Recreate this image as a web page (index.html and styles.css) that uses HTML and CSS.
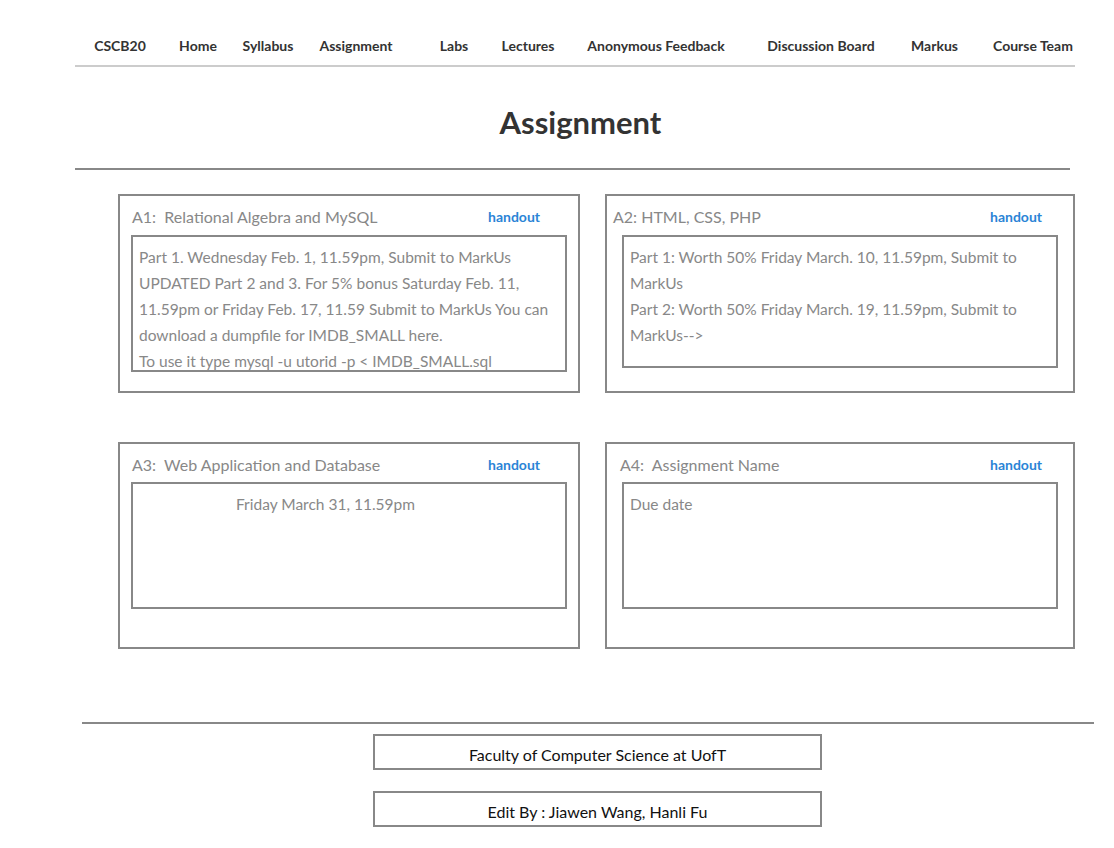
FILE: index.html
```html
<!DOCTYPE html>
<html lang="en">
<head>
    <meta charset="UTF-8" />
    <meta name="viewport" content="width=device-width, initial-scale=1.0" />
    <title>CSCB20 - Assignment</title>
    <link rel="stylesheet" href="styles.css">
</head>
<body>

<nav class="topnav">
    <a href="#">CSCB20</a>
    <a href="#">Home</a>
    <a href="#">Syllabus</a>
    <a href="#">Assignment</a>
    <a href="#">Labs</a>
    <a href="#">Lectures</a>
    <a href="#">Anonymous Feedback</a>
    <a href="#">Discussion Board</a>
    <a href="#">Markus</a>
    <a href="#">Course Team</a>
</nav>

<h1 class="page-title">Assignment</h1>

<div class="assignments">
    <!-- A1 -->
    <div class="card">
        <div class="card-head">
            <span class="card-title a1">A1:&nbsp; Relational Algebra and MySQL</span>
            <a class="handout" href="#">handout</a>
        </div>
        <div class="card-body tall">
            Part 1. Wednesday Feb. 1, 11.59pm, Submit to MarkUs<br>
            UPDATED Part 2 and 3. For 5% bonus Saturday Feb. 11,<br>
            11.59pm or Friday Feb. 17, 11.59 Submit to MarkUs You can<br>
            download a dumpfile for IMDB_SMALL here.<br>
            To use it type mysql -u utorid -p &lt; IMDB_SMALL.sql
        </div>
    </div>

    <!-- A2 -->
    <div class="card">
        <div class="card-head">
            <span class="card-title a2">A2: HTML, CSS, PHP</span>
            <a class="handout" href="#">handout</a>
        </div>
        <div class="card-body mid">
            Part 1: Worth 50% Friday March. 10, 11.59pm, Submit to<br>
            MarkUs<br>
            Part 2: Worth 50% Friday March. 19, 11.59pm, Submit to<br>
            MarkUs--&gt;
        </div>
    </div>

    <!-- A3 -->
    <div class="card">
        <div class="card-head">
            <span class="card-title a3">A3:&nbsp; Web Application and Database</span>
            <a class="handout" href="#">handout</a>
        </div>
        <div class="card-body short">
            <span class="due-indent">Friday March 31, 11.59pm</span>
        </div>
    </div>

    <!-- A4 -->
    <div class="card">
        <div class="card-head">
            <span class="card-title a4">A4:&nbsp; Assignment Name</span>
            <a class="handout" href="#">handout</a>
        </div>
        <div class="card-body short">
            Due date
        </div>
    </div>
</div>

<footer class="footer">
    <div class="footer-box">Faculty of Computer Science at UofT</div>
    <div class="footer-box">Edit By : Jiawen Wang, Hanli Fu</div>
</footer>

</body>
</html>
```

FILE: styles.css
```css
* {
    box-sizing: border-box;
    margin: 0;
    padding: 0;
}

body {
    font-family: 'Lato', 'Open Sans', sans-serif;
    background: white;
    color: #333;
}

a {
    text-decoration: none;
}

/* Top navigation */
.topnav {
    display: grid;
    grid-template-columns: 80px 76px 64px 112px 84px 64px 192px 138px 89px 108px;
    width: 1000px;
    margin-left: 75px;
    padding: 36px 0 9px 5px;
    border-bottom: 2px solid #cccccc;
}

.topnav a {
    color: #333;
    font-size: 14px;
    font-weight: bold;
    line-height: 20px;
    text-align: center;
    white-space: nowrap;
}

/* Page title */
.page-title {
    width: 995px;
    margin: 0 0 0 75px;
    padding: 36px 0 27px 16px;
    text-align: center;
    font-size: 31px;
    line-height: 38px;
    color: #333;
    border-bottom: 2px solid #888;
}

/* Assignment cards */
.assignments {
    display: grid;
    grid-template-columns: 462px 470px;
    grid-template-rows: 199px 207px;
    column-gap: 25px;
    row-gap: 49px;
    margin: 24px 0 0 118px;
}

.card {
    border: 2px solid #888;
    padding: 10px 11px 0;
}

.card:nth-child(even) {
    padding: 10px 15px 0;
}

.card-head {
    display: flex;
    justify-content: space-between;
    align-items: center;
    height: 20px;
    margin-bottom: 9px;
}

.card-title {
    color: #888;
    font-size: 16px;
    white-space: nowrap;
}

.card-title.a1,
.card-title.a3 {
    margin-left: 1px;
}

.card-title.a2 {
    margin-left: -9px;
}

.card-title.a4 {
    margin-left: -2px;
}

.handout {
    color: #2a84d6;
    font-size: 14px;
    font-weight: bold;
    margin-right: 27px;
}

.card:nth-child(even) .handout {
    margin-right: 16px;
}

.card-body {
    border: 2px solid #888;
    padding: 7px 6px 0;
    color: #888;
    font-size: 15.5px;
    line-height: 26px;
    overflow: hidden;
    white-space: nowrap;
}

.card-body.tall {
    height: 137px;
}

.card-body.mid {
    height: 133px;
    margin-top: 2px;
}

.card-body.short {
    height: 127px;
    margin-top: -1px;
}

.due-indent {
    padding-left: 97px;
}

/* Footer */
.footer {
    width: 1012px;
    margin: 73px 0 0 82px;
    padding-top: 10px;
    border-top: 2px solid #888;
}

.footer-box {
    width: 449px;
    height: 36px;
    margin: 0 0 21px 291px;
    padding-top: 4px;
    border: 2px solid #888;
    color: #111;
    font-size: 16px;
    line-height: 30px;
    text-align: center;
}
```
